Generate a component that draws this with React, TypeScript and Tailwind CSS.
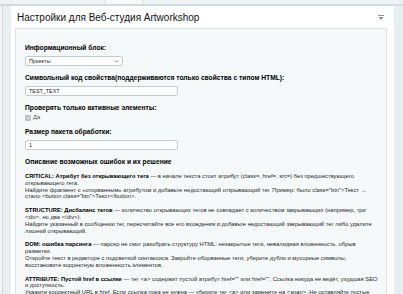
import { ChevronDown } from "lucide-react";

const label = "block text-[6.7px] leading-[8px] font-bold text-black";
const field = "h-[10px] bg-white border border-[#c3cbcf] rounded-[2px] text-[5.4px] text-[#222] flex items-center px-[3px]";
const para = "text-[5.8px] leading-[6.8px] text-[#2a2a2a] mb-[7px] whitespace-nowrap";

// each error: bold head, then the rest split into the lines the panel shows
const errors = [
  {
    head: "CRITICAL: Атрибут без открывающего тега",
    lines: [
      " — в начале текста стоит атрибут (class=, href=, src=) без предшествующего",
      "открывающего тега.",
      "Найдите фрагмент с «оторванным» атрибутом и добавьте недостающий открывающий тег. Пример: было class=\"btn\">Текст →",
      "стало <button class=\"btn\">Текст</button>.",
    ],
  },
  {
    head: "STRUCTURE: Дисбаланс тегов",
    lines: [
      " — количество открывающих тегов не совпадает с количеством закрывающих (например, три",
      "<div>, но два </div>).",
      "Найдите указанный в сообщении тег, пересчитайте все его вхождения и добавьте недостающий закрывающий тег либо удалите",
      "лишний открывающий.",
    ],
  },
  {
    head: "DOM: ошибка парсинга",
    lines: [
      " — парсер не смог разобрать структуру HTML: незакрытые теги, невалидная вложенность, обрыв",
      "разметки.",
      "Откройте текст в редакторе с подсветкой синтаксиса. Закройте оборванные теги, уберите дубли и мусорные символы,",
      "восстановите корректную вложенность элементов.",
    ],
  },
  {
    head: "ATTRIBUTE: Пустой href в ссылке",
    lines: [
      " — тег <a> содержит пустой атрибут href=\"\" или href=\"\". Ссылка никуда не ведёт, ухудшая SEO",
      "и доступность.",
      "Укажите корректный URL в href. Если ссылка пока не нужна — уберите тег <a> или замените на <span>. Не оставляйте пустые",
      "ссылки в тексте.",
    ],
  },
];

export default function App() {
  return (
    <div className="w-[403px] h-[294px] overflow-hidden bg-[#e9eef0] flex flex-col font-['Liberation_Sans',Arial,sans-serif]">
      {/* Top tabs strip */}
      <div className="h-[6px] flex flex-shrink-0 border-b-2 border-[#d3dadd]">
        <div className="w-[105px] bg-[#eef2f3]" />
        <div className="w-[38px] bg-[#f6f8f9] border-x border-[#d9dfe2]" />
        <div className="flex-1 bg-[#eef2f3]" />
      </div>

      <div className="flex flex-1 min-h-0">
        {/* Left gutter */}
        <div className="w-[11px] flex flex-shrink-0">
          <div className="w-[3px] bg-[#f1f4f5] border-r border-[#d2d9dc]" />
          <div className="flex-1" />
        </div>

        {/* Panel */}
        <div className="flex-1 bg-white flex flex-col min-h-0">
          <div className="h-[22px] flex items-center justify-between pl-[6px] pr-[10px] flex-shrink-0">
            <h1 className="text-[10px] text-[#111]">Настройки для Веб-студия Artworkshop</h1>
            <svg width="6" height="5" viewBox="0 0 6 5">
              <rect x="0" y="0" width="6" height="1" fill="#8a9296" />
              <path d="M0.5 2 L5.5 2 L3 5 Z" fill="#8a9296" />
            </svg>
          </div>

          <div className="flex-1 ml-[4px] mr-[7px] bg-[#f5f9f9] border border-[#d9e1e3] border-b-0 pl-[9px] pr-[8px] pt-[15px] overflow-hidden">
            <span className={label}>Информационный блок:</span>
            <div className={`${field} w-[98px] mt-[4px] justify-between`}>
              <span>Проекты</span>
              <ChevronDown size={5} strokeWidth={3} className="text-[#333]" />
            </div>

            <span className={`${label} mt-[8px]`}>Символьный код свойства(поддерживаются только свойства с типом HTML):</span>
            <div className={`${field} w-[153px] mt-[4px]`}>TEST_TEXT</div>

            <span className={`${label} mt-[8px]`}>Проверять только активные элементы:</span>
            <div className="flex items-center gap-[2px] mt-[1px] h-[9px]">
              <div className="w-[6px] h-[6px] rounded-[1px] bg-[#b9c0c4] flex items-center justify-center">
                <svg width="5" height="5" viewBox="0 0 10 10">
                  <path d="M2 5 L4.2 7.2 L8.2 2.6" stroke="white" strokeWidth="1.8" fill="none" />
                </svg>
              </div>
              <span className="text-[5.8px] text-[#555]">Да</span>
            </div>

            <span className={`${label} mt-[6px]`}>Размер пакета обработки:</span>
            <div className={`${field} w-[153px] mt-[4px]`}>1</div>

            <span className={`${label} mt-[8px] mb-[7px]`}>Описание возможных ошибок и их решение</span>

            {errors.map(e => (
              <p key={e.head} className={para}>
                <b className="font-bold text-black">{e.head}</b>
                {e.lines.map((l, i) => (
                  <span key={i}>
                    {i > 0 && <br />}
                    {l}
                  </span>
                ))}
              </p>
            ))}
          </div>
        </div>

        {/* Right gutter with scrollbar */}
        <div className="w-[13px] flex justify-end flex-shrink-0">
          <div className="w-[2px] h-[48px] mt-[5px] bg-[#c9d0d3]" />
        </div>
      </div>
    </div>
  );
}
